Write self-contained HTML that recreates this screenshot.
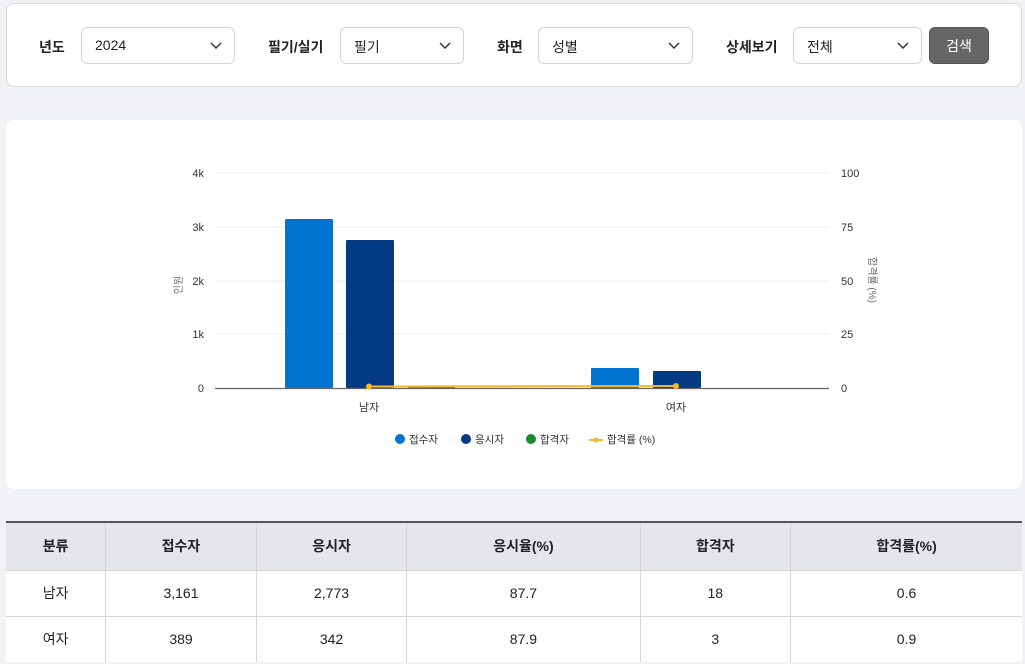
<!DOCTYPE html>
<html><head><meta charset="utf-8"><style>
*{box-sizing:border-box;margin:0;padding:0}
body{width:1025px;height:664px;background:#f1f2f5;font-family:"Liberation Sans","Noto Sans CJK KR",sans-serif;color:#222;position:relative;overflow:hidden}
.card{position:absolute;background:#fff;border-radius:8px}
.lbl{position:absolute;top:37px;font-size:14px;font-weight:bold}
.sel{position:absolute;top:27px;height:37px;border:1px solid #d4d4d4;border-radius:6px;font-size:14px;padding:9px 13px;background:#fff}
.sel svg{position:absolute;right:12px;top:14px}
.btn{position:absolute;left:929px;top:27px;width:60px;height:37px;background:#666;border-radius:6px;color:#fff;font-size:14px;text-align:center;line-height:37px;border:1px solid #555}
table{position:absolute;left:6px;top:521px;width:1016px;border-collapse:collapse;font-size:14px;background:#fff}
th{background:#e4e6ec;height:48px;font-weight:bold;border-top:2px solid #555}
td{height:46px;text-align:center;border-top:1px solid #d6d6d6}
th,td{border-right:1px solid #d6d6d6;text-align:center}
th:last-child,td:last-child{border-right:none}
</style></head><body>
<div class="card" style="left:6px;top:3px;width:1016px;height:84px;border:1px solid #d8d8d8"></div>
<div class="lbl" style="left:39px">년도</div>
<div class="sel" style="left:81px;width:154px">2024<svg width="12" height="8"><path d="M1 1l5 5 5-5" stroke="#333" stroke-width="1.5" fill="none"/></svg></div>
<div class="lbl" style="left:268px">필기/실기</div>
<div class="sel" style="left:340px;width:124px">필기<svg width="12" height="8"><path d="M1 1l5 5 5-5" stroke="#333" stroke-width="1.5" fill="none"/></svg></div>
<div class="lbl" style="left:497px">화면</div>
<div class="sel" style="left:538px;width:155px">성별<svg width="12" height="8"><path d="M1 1l5 5 5-5" stroke="#333" stroke-width="1.5" fill="none"/></svg></div>
<div class="lbl" style="left:726px">상세보기</div>
<div class="sel" style="left:793px;width:129px">전체<svg width="12" height="8"><path d="M1 1l5 5 5-5" stroke="#333" stroke-width="1.5" fill="none"/></svg></div>
<div class="btn">검색</div>

<div class="card" style="left:6px;top:120px;width:1016px;height:369px"></div>
<svg style="position:absolute;left:0;top:0" width="1025" height="500" font-family="Liberation Sans,Noto Sans CJK KR,sans-serif" font-size="11" fill="#333">
<g stroke="#ececec"><line x1="215" y1="173" x2="829" y2="173"/><line x1="215" y1="227" x2="829" y2="227"/><line x1="215" y1="281" x2="829" y2="281"/><line x1="215" y1="334" x2="829" y2="334"/></g>
<g text-anchor="end"><text x="204" y="177">4k</text><text x="204" y="231">3k</text><text x="204" y="285">2k</text><text x="204" y="338">1k</text><text x="204" y="392">0</text></g>
<g><text x="841" y="177">100</text><text x="841" y="231">75</text><text x="841" y="285">50</text><text x="841" y="338">25</text><text x="841" y="392">0</text></g>
<text transform="translate(182,285) rotate(-90)" text-anchor="middle" font-size="10" fill="#666">인원</text>
<text transform="translate(869,280) rotate(90)" text-anchor="middle" font-size="10" fill="#666">합격률 (%)</text>
<rect x="285" y="219" width="48" height="169" fill="#0074d0" rx="1"/>
<rect x="346" y="240" width="48" height="148" fill="#023a84" rx="1"/>
<rect x="408" y="387" width="47" height="1.5" fill="#1a8a2a"/>
<rect x="591" y="368" width="48" height="20" fill="#0074d0" rx="1"/>
<rect x="653" y="371" width="48" height="17" fill="#023a84" rx="1"/>
<line x1="215" y1="388.5" x2="829" y2="388.5" stroke="#666" stroke-width="1.2"/>
<line x1="369" y1="386.5" x2="676" y2="386" stroke="#f5b82e" stroke-width="2"/>
<circle cx="369" cy="386.5" r="3" fill="#f5b82e"/><circle cx="676" cy="386" r="3" fill="#f5b82e"/>
<text x="369" y="411" text-anchor="middle">남자</text><text x="676" y="411" text-anchor="middle">여자</text>
<g font-size="10.5">
<circle cx="400" cy="439" r="5" fill="#0074d0"/><text x="409" y="443">접수자</text>
<circle cx="466" cy="439" r="5" fill="#023a84"/><text x="475" y="443">응시자</text>
<circle cx="531" cy="439" r="5" fill="#1a8a2a"/><text x="540" y="443">합격자</text>
<line x1="589" y1="440" x2="603" y2="440" stroke="#f5b82e" stroke-width="2"/><circle cx="596" cy="440" r="2.5" fill="#f5b82e"/><text x="607" y="443">합격률 (%)</text>
</g>
</svg>

<table>
<tr><th>분류</th><th>접수자</th><th>응시자</th><th>응시율(%)</th><th>합격자</th><th>합격률(%)</th></tr>
<tr><td>남자</td><td>3,161</td><td>2,773</td><td>87.7</td><td>18</td><td>0.6</td></tr>
<tr><td>여자</td><td>389</td><td>342</td><td>87.9</td><td>3</td><td>0.9</td></tr>
</table>
</body></html>
